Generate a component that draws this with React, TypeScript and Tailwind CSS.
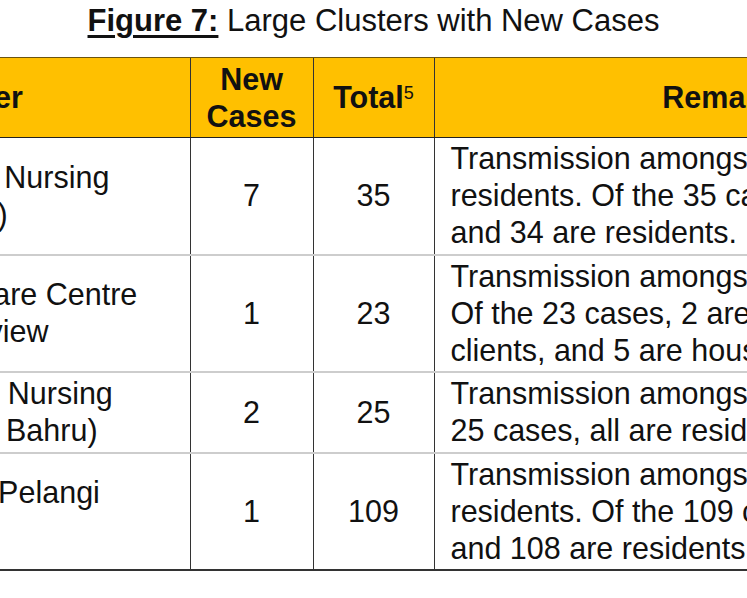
import React from 'react';

type Row = {
  cluster: string[];
  newCases: number;
  total: number;
  remarks: string[];
  height: string;
};

const rows: Row[] = [
  {
    cluster: ['Pacific Eldercare Nursing', 'Home (Tampines)'],
    newCases: 7,
    total: 35,
    remarks: ['Transmission amongst staff and', 'residents. Of the 35 cases, 1 is staff', 'and 34 are residents.'],
    height: 'h-[117px]',
  },
  {
    cluster: ["St Luke's ElderCare Centre", 'at Punggol Lakeview'],
    newCases: 1,
    total: 23,
    remarks: ['Transmission amongst staff and clients.', 'Of the 23 cases, 2 are staff, 16 are', 'clients, and 5 are household contacts.'],
    height: 'h-[117px]',
  },
  {
    cluster: ['Econ HealthCare Nursing', 'Home (Kampong Bahru)'],
    newCases: 2,
    total: 25,
    remarks: ['Transmission amongst residents. Of the', '25 cases, all are residents.'],
    height: 'h-[81px]',
  },
  {
    cluster: ['Kwong Wai Shiu Pelangi', 'Home'],
    newCases: 1,
    total: 109,
    remarks: ['Transmission amongst staff and', 'residents. Of the 109 cases, 1 is staff', 'and 108 are residents.'],
    height: 'h-[117px]',
  },
];

const Lines: React.FC<{ lines: string[] }> = ({ lines }) => (
  <>
    {lines.map((l, i) => (
      <span key={i} className="block whitespace-nowrap">
        {l}
      </span>
    ))}
  </>
);

export default function App() {
  return (
    <div className="w-[747px] h-[598px] overflow-hidden bg-white text-[#111] font-['Liberation_Sans',Arial,sans-serif]">
      <h1 className="pt-[3px] text-center text-[31px] leading-[36px] whitespace-nowrap">
        <span className="font-bold underline decoration-[3px] underline-offset-[4px]">Figure 7:</span> Large Clusters with New Cases
      </h1>

      <table className="mt-[18px] ml-[-249px] w-[1268px] table-fixed border-collapse text-[30.5px] leading-[37px]">
        <colgroup>
          <col className="w-[439px]" />
          <col className="w-[123px]" />
          <col className="w-[121px]" />
          <col className="w-[585px]" />
        </colgroup>
        <thead>
          <tr className="h-[80px] bg-[#FFC000] font-bold">
            <th className="border-t border-b border-t-[#6b5410] border-b-[#222] text-center align-middle">Cluster</th>
            <th className="border-t border-b border-l border-t-[#6b5410] border-b-[#222] border-l-[#333] text-center align-middle">
              New
              <br />
              Cases
            </th>
            <th className="border-t border-b border-l border-t-[#6b5410] border-b-[#222] border-l-[#333] text-center align-middle">
              Total<sup className="text-[18px] font-normal">5</sup>
            </th>
            <th className="border-t border-b border-l border-t-[#6b5410] border-b-[#222] border-l-[#333] text-center align-middle">Remarks</th>
          </tr>
        </thead>
        <tbody>
          {rows.map((r, i) => {
            const sep = i === 0 ? 'border-t-0' : 'border-t-2 border-t-[#cdcdcd]';
            const bottom = i === rows.length - 1 ? 'border-b-2 border-b-[#333]' : '';
            return (
              <tr key={i} className={r.height}>
                <td className={`${sep} ${bottom} pl-4 align-middle text-left`}>
                  <Lines lines={r.cluster} />
                </td>
                <td className={`${sep} ${bottom} border-l border-l-[#333] text-center align-middle`}>{r.newCases}</td>
                <td className={`${sep} ${bottom} border-l border-l-[#333] text-center align-middle`}>{r.total}</td>
                <td className={`${sep} ${bottom} border-l border-l-[#333] pl-4 text-left align-middle`}>
                  <Lines lines={r.remarks} />
                </td>
              </tr>
            );
          })}
        </tbody>
      </table>
    </div>
  );
}
